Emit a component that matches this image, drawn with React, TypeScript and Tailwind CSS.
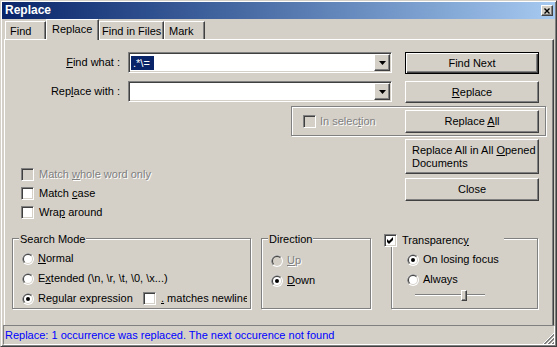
import React from "react";

const raised =
  "border border-t-white border-l-white border-r-[#404040] border-b-[#404040] shadow-[inset_-1px_-1px_0_#808080]";
const sunken =
  "border border-t-[#808080] border-l-[#808080] border-r-white border-b-white shadow-[inset_1px_1px_0_#404040,inset_-1px_-1px_0_#d4d0c8]";
const grayText = "text-[#808080] [text-shadow:1px_1px_0_#fff]";

function Key({ children }: { children: React.ReactNode }) {
  return <span className="underline decoration-1 underline-offset-[1px]">{children}</span>;
}

function Button({
  children,
  className = "",
  isDefault = false,
}: {
  children: React.ReactNode;
  className?: string;
  isDefault?: boolean;
}) {
  return (
    <button
      type="button"
      className={`flex shrink-0 items-center whitespace-nowrap bg-[#d4d0c8] text-black ${
        isDefault
          ? "border border-black shadow-[inset_1px_1px_0_#fff,inset_-1px_-1px_0_#404040,inset_-2px_-2px_0_#808080]"
          : raised
      } ${className}`}
    >
      {children}
    </button>
  );
}

function CheckBox({ checked, disabled }: { checked?: boolean; disabled?: boolean }) {
  return (
    <span
      className={`flex h-[13px] w-[13px] shrink-0 items-center justify-center ${sunken} ${
        disabled ? "bg-[#d4d0c8]" : "bg-white"
      }`}
    >
      {checked && (
        <svg width="7" height="7" viewBox="0 0 7 7">
          <path d="M0 2 L2 4 L6 0 L6 3 L2 7 L0 5 Z" fill="#000" />
        </svg>
      )}
    </span>
  );
}

function Radio({ checked, disabled }: { checked?: boolean; disabled?: boolean }) {
  return (
    <svg width="12" height="12" viewBox="0 0 12 12" className="shrink-0">
      <circle cx="6" cy="6" r="6" fill="#fff" />
      <path d="M1.76 10.24 A6 6 0 0 1 10.24 1.76 Z" fill="#808080" />
      <circle cx="6" cy="6" r="5" fill="#d4d0c8" />
      <path d="M2.46 9.54 A5 5 0 0 1 9.54 2.46 Z" fill="#404040" />
      <circle cx="6" cy="6" r="4" fill={disabled ? "#d4d0c8" : "#fff"} />
      {checked && <circle cx="6" cy="6" r="2" fill="#000" />}
    </svg>
  );
}

function CheckRow({
  checked,
  disabled,
  children,
}: {
  checked?: boolean;
  disabled?: boolean;
  children: React.ReactNode;
}) {
  return (
    <div className="flex h-[13px] items-center gap-[5px] whitespace-nowrap">
      <CheckBox checked={checked} disabled={disabled} />
      <span className={disabled ? grayText : ""}>{children}</span>
    </div>
  );
}

function RadioRow({
  checked,
  disabled,
  children,
}: {
  checked?: boolean;
  disabled?: boolean;
  children: React.ReactNode;
}) {
  return (
    <div className="flex h-[13px] items-center gap-[4px] whitespace-nowrap">
      <Radio checked={checked} disabled={disabled} />
      <span className={disabled ? grayText : ""}>{children}</span>
    </div>
  );
}

function Group({
  label,
  className = "",
  children,
}: {
  label?: React.ReactNode;
  className?: string;
  children?: React.ReactNode;
}) {
  return (
    <div
      className={`relative shrink-0 border border-[#808080] shadow-[inset_1px_1px_0_#fff,1px_1px_0_#fff] ${className}`}
    >
      {label}
      {children}
    </div>
  );
}

function Legend({ children }: { children: React.ReactNode }) {
  return (
    <span className="absolute -top-[6px] left-[6px] bg-[#d4d0c8] px-[1px] leading-[13px] whitespace-nowrap">
      {children}
    </span>
  );
}

function Combo({ value, className = "" }: { value?: string; className?: string }) {
  return (
    <div className={`flex h-[21px] w-[264px] shrink-0 items-center bg-white p-[1px] pl-[2px] ${sunken} ${className}`}>
      <div className="flex-1">
        {value && (
          <span className="inline-block bg-[#0a246a] pl-[2px] pr-[4px] leading-[14px] text-white">{value}</span>
        )}
      </div>
      <span className={`flex h-[17px] w-[16px] items-center justify-center bg-[#d4d0c8] ${raised}`}>
        <svg width="7" height="4" viewBox="0 0 7 4">
          <path d="M0 0 H7 L3.5 4 Z" fill="#000" />
        </svg>
      </span>
    </div>
  );
}

export default function App() {
  return (
    <div className="flex h-[347px] w-[557px] flex-col border border-[#d4d0c8] border-r-[#404040] border-b-[#404040] bg-[#d4d0c8] p-[1px] font-['Liberation_Sans',Arial,sans-serif] text-[11px] leading-[13px] text-black shadow-[inset_1px_1px_0_#fff,inset_-1px_-1px_0_#808080]">
      {/* Title bar */}
      <div className="flex h-[17px] shrink-0 items-center justify-between bg-linear-to-r from-[#0a246a] to-[#a6caf0] pl-[3px] pr-[2px]">
        <span className="text-[12px] font-bold text-white">Replace</span>
        <span className={`flex h-[11px] w-[12px] items-center justify-center bg-[#d4d0c8] ${raised}`}>
          <svg width="6" height="6" viewBox="0 0 6 6">
            <path d="M0.5 0.5 L5.5 5.5 M5.5 0.5 L0.5 5.5" stroke="#000" strokeWidth="1.4" />
          </svg>
        </span>
      </div>

      {/* Tabs */}
      <div className="flex h-[20px] shrink-0 items-start pl-[3px]">
        <div className="mt-[2px] h-[18px] w-[41px] border border-b-0 border-t-white border-l-white border-r-[#404040] pl-[4px] pt-[3px] shadow-[inset_-1px_0_0_#808080]">
          Find
        </div>
        <div className="relative z-10 h-[21px] w-[53px] border border-b-0 border-t-white border-l-white border-r-[#404040] bg-[#d4d0c8] pl-[5px] pt-[3px] shadow-[inset_-1px_0_0_#808080]">
          Replace
        </div>
        <div className="mt-[2px] h-[18px] w-[65px] border border-b-0 border-t-white border-l-white border-r-[#404040] pl-[2px] pt-[3px] shadow-[inset_-1px_0_0_#808080] whitespace-nowrap">
          Find in Files
        </div>
        <div className="mt-[2px] h-[18px] w-[41px] border border-b-0 border-t-white border-l-white border-r-[#404040] pl-[4px] pt-[3px] shadow-[inset_-1px_0_0_#808080]">
          Mark
        </div>
      </div>

      {/* Tab panel */}
      <div className="ml-[2px] mr-[1px] flex-1 border border-b-0 border-t-white border-l-white border-r-[#404040] shadow-[inset_-1px_0_0_#808080]">
        <div className="pt-[12px]">
          <div className="flex items-start">
            <div className="flex h-[21px] w-[115px] shrink-0 items-center justify-end whitespace-nowrap">
              <span>
                <Key>F</Key>ind what :
              </span>
            </div>
            <Combo className="ml-[8px]" value={".*\\="} />
            <Button isDefault className="ml-[13px] h-[22px] w-[134px] justify-center">
              Find Next
            </Button>
          </div>

          <div className="mt-[7px] flex items-start">
            <div className="flex h-[21px] w-[115px] shrink-0 items-center justify-end whitespace-nowrap">
              <span>
                Rep<Key>l</Key>ace with :
              </span>
            </div>
            <Combo className="ml-[8px]" />
            <Button className="ml-[13px] h-[22px] w-[134px] justify-center">
              <span>
                <Key>R</Key>eplace
              </span>
            </Button>
          </div>

          <Group className="ml-[286px] mt-[3px] flex h-[30px] w-[255px] items-center">
            <div className="flex w-[113px] shrink-0 items-center gap-[4px] pl-[11px] whitespace-nowrap">
              <CheckBox disabled />
              <span className={grayText}>
                In selec<Key>t</Key>ion
              </span>
            </div>
            <Button className="h-[23px] w-[134px] justify-center">
              <span>
                Replace <Key>A</Key>ll
              </span>
            </Button>
          </Group>

          <div className="flex items-start">
            <div className="flex w-[400px] shrink-0 flex-col gap-[6px] pl-[16px] pt-[32px]">
              <CheckRow disabled>
                Match <Key>w</Key>hole word only
              </CheckRow>
              <CheckRow>
                Match <Key>c</Key>ase
              </CheckRow>
              <CheckRow>
                Wra<Key>p</Key> around
              </CheckRow>
            </div>
            <div className="flex flex-col pt-[3px]">
              <Button className="h-[35px] w-[134px] justify-start px-[6px]">
                <span className="text-left">
                  Replace All in All <Key>O</Key>pened
                  <br />
                  Documents
                </span>
              </Button>
              <Button className="mt-[4px] h-[23px] w-[134px] justify-center">Close</Button>
            </div>
          </div>

          <div className="mt-[19px] flex items-start">
            <Group className="ml-[7px] h-[71px] w-[239px]" label={<Legend>Search Mode</Legend>}>
              <div className="flex flex-col gap-[7px] pl-[9px] pt-[13px]">
                <RadioRow>
                  <Key>N</Key>ormal
                </RadioRow>
                <RadioRow>
                  E<Key>x</Key>tended {"(\\n, \\r, \\t, \\0, \\x...)"}
                </RadioRow>
                <div className="flex h-[13px] items-center whitespace-nowrap">
                  <Radio checked />
                  <span className="ml-[4px] w-[105px] shrink-0">
                    Re<Key>g</Key>ular expression
                  </span>
                  <CheckBox />
                  <span className="ml-[5px] w-[86px] shrink-0 overflow-hidden">
                    <Key>.</Key> matches newline
                  </span>
                </div>
              </div>
            </Group>

            <Group className="ml-[10px] h-[71px] w-[110px]" label={<Legend>Direction</Legend>}>
              <div className="flex flex-col gap-[7px] pl-[9px] pt-[15px]">
                <RadioRow disabled>
                  <Key>U</Key>p
                </RadioRow>
                <RadioRow checked>
                  <Key>D</Key>own
                </RadioRow>
              </div>
            </Group>

            <Group
              className="ml-[20px] h-[71px] w-[147px]"
              label={
                <div className="absolute -left-[8px] -top-[5px] flex h-[13px] w-[120px] items-center gap-[5px] bg-[#d4d0c8] whitespace-nowrap">
                  <CheckBox checked />
                  <span>
                    Transparenc<Key>y</Key>
                  </span>
                </div>
              }
            >
              <div className="flex flex-col gap-[7px] pl-[15px] pt-[14px]">
                <RadioRow checked>On losing focus</RadioRow>
                <RadioRow>Always</RadioRow>
              </div>
              <div className="relative ml-[23px] mt-[4px] h-[11px] w-[70px]">
                <div className="absolute left-0 right-0 top-[4px] h-[2px] border-t border-b border-t-[#808080] border-b-white" />
                <div className={`absolute left-[46px] top-0 h-[11px] w-[6px] bg-[#d4d0c8] ${raised}`} />
              </div>
            </Group>
          </div>
        </div>
      </div>

      {/* Status bar */}
      <div className="ml-[1px] flex h-[20px] shrink-0 items-center justify-between border border-t-[#808080] border-l-[#808080] border-r-white border-b-white text-[#0000ff]">
        <span className="whitespace-nowrap pl-[1px]">
          Replace: 1 occurrence was replaced. The next occurence not found
        </span>
        <svg width="12" height="12" viewBox="0 0 12 12" className="self-end">
          <path d="M12 1 L1 12 M12 5 L5 12 M12 9 L9 12" stroke="#fff" strokeWidth="1" />
          <path d="M12 2 L2 12 M12 3 L3 12 M12 6 L6 12 M12 7 L7 12 M12 10 L10 12 M12 11 L11 12" stroke="#808080" strokeWidth="1" />
        </svg>
      </div>
    </div>
  );
}
